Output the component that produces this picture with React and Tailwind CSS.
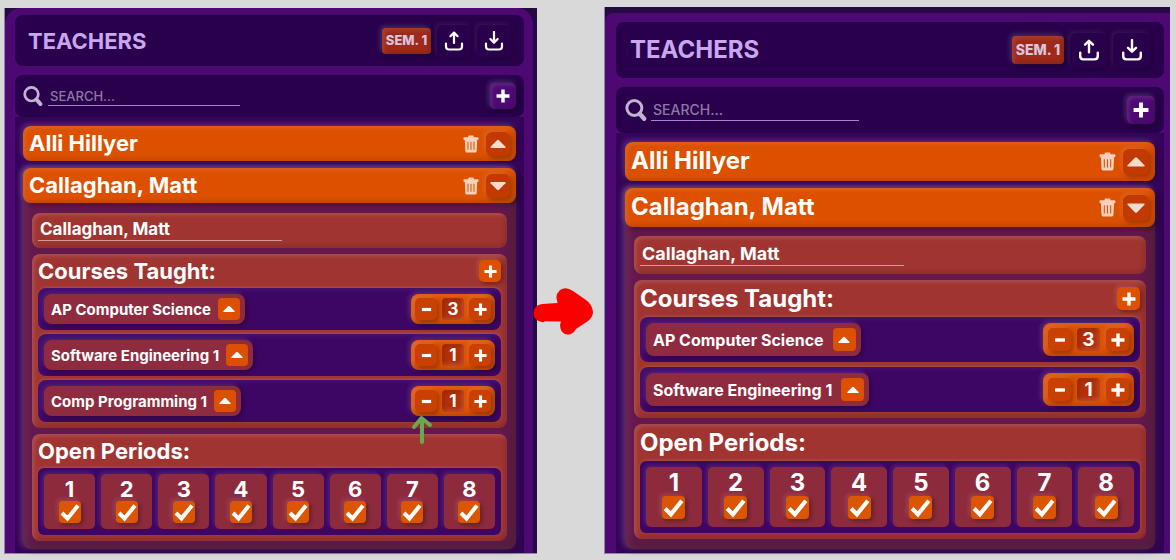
import React, { useState } from "react";

const INSET = "shadow-[inset_2px_2px_4px_rgba(255,255,255,0.16),inset_-2px_-2px_4px_rgba(0,0,0,0.16)]";
const RAISED =
  "shadow-[-2px_-2px_4px_rgba(255,255,255,0.12),2px_2px_4px_rgba(0,0,0,0.3)]";
const FLAT =
  "shadow-[-2px_-2px_4px_rgba(255,255,255,0.07),2px_2px_4px_rgba(0,0,0,0.2)]";
const BOTH =
  "shadow-[-2px_-2px_5px_rgba(255,255,255,0.16),2px_2px_5px_rgba(0,0,0,0.35),inset_2px_2px_4px_rgba(255,255,255,0.12),inset_-2px_-2px_4px_rgba(0,0,0,0.14)]";

const COMPACT = {
  frame: "pr-1",
  shell: "pl-[10px] pr-[9px] pt-[7px] rounded-t-2xl",
  header: "h-[51px] pl-[13px] pr-[13px]",
  title: "text-[22px]",
  sem: "w-[49px] h-[26px] text-[13px]",
  tool: "w-[34px] h-8",
  toolIcon: "w-5 h-5",
  search: "h-[42px] mt-[9px] pl-2 pr-2",
  searchIcon: "w-5 h-5",
  searchInput: "w-48 h-[19px] text-[13px] leading-4 ml-[5px]",
  add: "w-[26px] h-[26px]",
  addIcon: "w-[14px] h-[14px]",
  list: "gap-[7px] px-2 pt-[9px] pb-1",
  bar: "h-[35px] pl-[6px]",
  barText: "text-[22px]",
  trash: "w-4 h-[18px]",
  toggle: "w-6 h-6",
  toggleIcon: "w-4 h-4",
  details: "px-[9px] pt-[10px] pb-2",
  nameCard: "h-[35px]",
  nameInput: "w-[244px] h-[23px] text-[17px] leading-5",
  section: "h-[34px]",
  sectionText: "text-[22px]",
  rows: "gap-1",
  row: "h-[42px]",
  tag: "h-[30px] pr-[5px] gap-[7px]",
  tagText: "text-[15px]",
  mini: "w-[22px] h-[22px]",
  miniIcon: "w-[13px] h-[13px]",
  stepper: "h-[30px] px-1 gap-[5px]",
  count: "text-[17px]",
  cell: "h-[55px] pt-[3px]",
  digit: "text-[22px] leading-6",
};

const LARGE = {
  frame: "pt-[6px]",
  shell: "pl-[11px] pr-[6px] pt-[9px] rounded-tl-lg",
  header: "h-[56px] pl-[14px] pr-[14px]",
  title: "text-[24px]",
  sem: "w-[52px] h-7 text-[14px]",
  tool: "w-[37px] h-[35px]",
  toolIcon: "w-[22px] h-[22px]",
  search: "h-[46px] mt-[9px] pl-[9px] pr-[9px]",
  searchIcon: "w-[22px] h-[22px]",
  searchInput: "w-52 h-[21px] text-[14px] leading-[18px] ml-[4px]",
  add: "w-7 h-7",
  addIcon: "w-4 h-4",
  list: "gap-[7px] px-[9px] pt-[9px] pb-1",
  bar: "h-[39px] pl-[6px]",
  barText: "text-[24px]",
  trash: "w-[17px] h-[19px]",
  toggle: "w-[26px] h-[26px]",
  toggleIcon: "w-[18px] h-[18px]",
  details: "px-[9px] pt-[9px] pb-[10px]",
  nameCard: "h-[38px]",
  nameInput: "w-[264px] h-[25px] text-[18px] leading-[22px]",
  section: "h-[37px]",
  sectionText: "text-[24px]",
  rows: "gap-[5px]",
  row: "h-[45px]",
  tag: "h-[33px] pr-[5px] gap-[9px]",
  tagText: "text-[16px]",
  mini: "w-[23px] h-[23px]",
  miniIcon: "w-[14px] h-[14px]",
  stepper: "h-[33px] px-[5px] gap-[6px]",
  count: "text-[19px]",
  cell: "h-[60px] pt-[3px]",
  digit: "text-[24px] leading-[26px]",
};

function Plus({ className }) {
  return (
    <svg viewBox="0 0 14 14" className={className} aria-hidden="true">
      <path d="M7 .5v13M.5 7h13" stroke="#fff" strokeWidth="3.4" fill="none" />
    </svg>
  );
}

function Minus({ className }) {
  return (
    <svg viewBox="0 0 14 14" className={className} aria-hidden="true">
      <path d="M2 7h10" stroke="#fff" strokeWidth="3.4" fill="none" />
    </svg>
  );
}

function Caret({ className, down, color = "#fff" }) {
  return (
    <svg viewBox="0 0 16 16" className={className} aria-hidden="true">
      <path
        d={down ? "M.5 5.2Q0 4 1.2 4h13.6q1.2 0 .7 1.2L9 11.8q-1 .9-2 0z" : "M.5 10.8Q0 12 1.2 12h13.6q1.2 0 .7-1.2L9 4.2q-1-.9-2 0z"}
        fill={color}
      />
    </svg>
  );
}

function Trash({ className }) {
  return (
    <svg viewBox="0 0 16 18" className={className} aria-hidden="true">
      <path
        fill="#f8d0bb"
        fillRule="evenodd"
        d="M5.2 2.2V1.5Q5.2.5 6.2.5h3.6q1 0 1 1v.7h4q.7 0 .7.7v1.4q0 .6-.6.6h-.7l-.5 11q-.1 1.6-1.6 1.6H3.9q-1.5 0-1.6-1.6l-.5-11h-.7q-.6 0-.6-.6V2.9q0-.7.7-.7zM4.500 6.800v7.900h1V6.800zM7.500 6.800v7.900h1V6.800zM10.500 6.800v7.900h1V6.800z"
      />
    </svg>
  );
}

function Tray({ className, up }) {
  return (
    <svg viewBox="0 0 20 20" className={className} aria-hidden="true">
      <g fill="none" stroke="#fff" strokeWidth="2.2" strokeLinecap="round" strokeLinejoin="round">
        <path d="M2 12.500v3Q2 18.500 5 18.500h10q3 0 3-3v-3" />
        <path d={up ? "M10 12V2M6.400 5.200 10 1.600l3.600 3.600" : "M10 1v10M6.400 8 10 11.600 13.600 8"} />
      </g>
    </svg>
  );
}

function Magnifier({ className }) {
  return (
    <svg viewBox="0 0 20 20" className={className} aria-hidden="true">
      <circle cx="8.500" cy="8.200" r="6.800" fill="none" stroke="#c3b3d2" strokeWidth="2.700" />
      <path d="m13.400 13.400 4 4.600" stroke="#c3b3d2" strokeWidth="4" strokeLinecap="round" />
    </svg>
  );
}

function Pointer() {
  return (
    <svg viewBox="0 0 22 30" className="absolute left-0 top-[29px] z-10 w-[22px] h-[30px] pointer-events-none" aria-hidden="true">
      <path d="M11 27V4M3 12 10.500 3 19 10" fill="none" stroke="#6aa84f" strokeWidth="4" strokeLinecap="round" strokeLinejoin="round" />
    </svg>
  );
}

function Stepper({ s, name, start, marked }) {
  const [count, setCount] = useState(start);
  const btn = `${s.mini} grid place-items-center rounded-[5px] bg-[#ca3f02] ${RAISED}`;
  return (
    <div className={`${s.stepper} relative flex items-center rounded-lg bg-[#dc5000] ${BOTH}`}>
      <button type="button" aria-label={`Fewer sections of ${name}`} className={btn} onClick={() => setCount(Math.max(0, count - 1))}>
        <Minus className={s.miniIcon} />
      </button>
      <output className={`${s.mini} ${s.count} grid place-items-center rounded-[4px] bg-[#b42f08] font-bold leading-none shadow-[inset_2px_2px_4px_rgba(0,0,0,0.15),inset_-2px_-2px_4px_rgba(255,255,255,0.16)]`}>
        {count}
      </output>
      <button type="button" aria-label={`More sections of ${name}`} className={btn} onClick={() => setCount(count + 1)}>
        <Plus className={s.miniIcon} />
      </button>
      {marked && <Pointer />}
    </div>
  );
}

function TeacherBar({ s, name, down }) {
  return (
    <div className={`${s.bar} flex items-center rounded-lg bg-[#dc5000] pr-[6px] ${BOTH}`}>
      <h3 className={`${s.barText} grow pb-px font-bold leading-none`}>{name}</h3>
      <button type="button" aria-label={`Delete ${name}`} className="mr-[7px]">
        <Trash className={s.trash} />
      </button>
      <button type="button" aria-label={`Toggle ${name}`} className={`${s.toggle} grid place-items-center rounded-md bg-[#c23a02] ${RAISED}`}>
        <Caret down={down} color="#f8dccf" className={s.toggleIcon} />
      </button>
    </div>
  );
}

function Panel({ s, id, courses }) {
  const card = `rounded-lg bg-[#a03431] px-[6px] ${INSET}`;
  return (
    <section className={`${s.frame} flex border-b border-l border-[#8f84a3] bg-[#260b42]`}>
      <div className={`${s.shell} flex min-w-0 grow flex-col bg-[#4e0874]`}>
        <header className={`${s.header} flex items-center gap-[6px] rounded-lg bg-[#28004c]`}>
          <h2 className={`${s.title} grow font-bold leading-none text-[#c9a6ee]`}>TEACHERS</h2>
          <button type="button" className={`${s.sem} whitespace-nowrap rounded-[4px] bg-[#9f2a19] font-extrabold leading-none text-[#dac5de] ${BOTH}`}>
            SEM. 1
          </button>
          <button type="button" aria-label="Upload" className={`${s.tool} grid place-items-center rounded-md ${FLAT}`}>
            <Tray up className={s.toolIcon} />
          </button>
          <button type="button" aria-label="Download" className={`${s.tool} grid place-items-center rounded-md ${FLAT}`}>
            <Tray className={s.toolIcon} />
          </button>
        </header>

        <div className={`${s.search} flex items-center rounded-lg bg-[#28004c]`}>
          <label htmlFor={`${id}-search`}>
            <span className="sr-only">Search teachers</span>
            <Magnifier className={s.searchIcon} />
          </label>
          <input
            id={`${id}-search`}
            type="text"
            placeholder="SEARCH..."
            className={`${s.searchInput} border-b border-[#a883cf] bg-transparent px-[2px] font-medium text-white outline-none placeholder:text-[#8f78a5] placeholder:opacity-100`}
          />
          <button type="button" aria-label="Add teacher" className={`${s.add} ml-auto grid place-items-center rounded-[5px] bg-[#4e0a74] ${BOTH}`}>
            <Plus className={s.addIcon} />
          </button>
        </div>

        <div className={`${s.list} flex grow flex-col bg-[#3d0662] shadow-[inset_5px_0_6px_rgba(20,0,50,0.25),inset_-5px_0_6px_rgba(20,0,50,0.25)]`}>
          <TeacherBar s={s} name="Alli Hillyer" />
          <div className="rounded-lg bg-[#64184d] shadow-[-2px_-1px_6px_rgba(255,255,255,0.2),2px_2px_6px_rgba(0,0,0,0.35),inset_5px_0_6px_rgba(255,255,255,0.06),inset_-6px_-6px_8px_rgba(50,40,30,0.35)]">
            <TeacherBar s={s} name="Callaghan, Matt" down />
            <div className={`${s.details} flex flex-col gap-[6px]`}>
              <div className={`${card} ${s.nameCard} pt-[5px]`}>
                <input
                  type="text"
                  aria-label="Teacher name"
                  defaultValue="Callaghan, Matt"
                  className={`${s.nameInput} block border-b border-[#cf9a98] bg-transparent px-[2px] font-bold outline-none`}
                />
              </div>

              <div className={`${card} pb-[6px]`}>
                <div className={`${s.section} flex items-center justify-between`}>
                  <h4 className={`${s.sectionText} font-bold leading-none`}>Courses Taught:</h4>
                  <button type="button" aria-label="Add course" className={`${s.mini} grid place-items-center rounded-[5px] bg-[#dc5000] ${RAISED}`}>
                    <Plus className={s.miniIcon} />
                  </button>
                </div>
                <ul className={`${s.rows} flex flex-col`}>
                  {courses.map((c) => (
                    <li key={c.name} className={`${s.row} flex items-center justify-between rounded-lg bg-[#3e0664] px-[6px] shadow-[0_-1px_3px_rgba(255,255,255,0.14),inset_2px_2px_4px_rgba(90,60,160,0.25)]`}>
                      <div className={`${s.tag} flex items-center rounded-lg bg-[#8f2b3f] pl-[7px] ${RAISED}`}>
                        <span className={`${s.tagText} whitespace-nowrap font-bold leading-none`}>{c.name}</span>
                        <button type="button" aria-label={`Change ${c.name}`} className={`${s.mini} grid place-items-center rounded-[4px] bg-[#dc5000]`}>
                          <Caret className="h-3 w-3" />
                        </button>
                      </div>
                      <Stepper s={s} name={c.name} start={c.count} marked={c.marked} />
                    </li>
                  ))}
                </ul>
              </div>

              <div className={`${card} pb-[6px]`}>
                <div className={`${s.section} flex items-center`}>
                  <h4 className={`${s.sectionText} font-bold leading-none`}>Open Periods:</h4>
                </div>
                <div className="grid grid-cols-8 gap-[6px] rounded-md bg-[#3e0664] p-[6px] shadow-[0_-1px_3px_rgba(255,255,255,0.14)]">
                  {[1, 2, 3, 4, 5, 6, 7, 8].map((n) => (
                    <label key={n} className={`${s.cell} flex flex-col items-center rounded-[5px] bg-[#8d2b3d] shadow-[-2px_-2px_4px_rgba(255,255,255,0.1)]`}>
                      <span className={`${s.digit} font-bold`}>{n}</span>
                      <span className={`${s.mini} grid`}>
                        <input type="checkbox" defaultChecked className={`peer col-start-1 row-start-1 h-full w-full appearance-none rounded-[4px] bg-[#dc5500] ${RAISED}`} />
                        <svg viewBox="0 0 22 22" className="pointer-events-none invisible relative col-start-1 row-start-1 h-full w-full peer-checked:visible" aria-hidden="true">
                          <path d="m3 12 5.500 5.500L19 4.500" fill="none" stroke="#fff" strokeWidth="4" />
                        </svg>
                      </span>
                    </label>
                  ))}
                </div>
              </div>
            </div>
          </div>
        </div>
      </div>
    </section>
  );
}

const BEFORE = [
  { name: "AP Computer Science", count: 3 },
  { name: "Software Engineering 1", count: 1 },
  { name: "Comp Programming 1", count: 1, marked: true },
];
const AFTER = BEFORE.slice(0, 2);

export default function App() {
  return (
    <main className="min-h-screen bg-[#d9d9d9] pb-[6px] pl-1 pr-[6px] pt-[7px] font-['Inter',sans-serif] text-white">
      <div className="grid grid-cols-[533fr_67fr_566fr] items-start">
        <div className="pt-px">
          <Panel s={COMPACT} id="before" courses={BEFORE} />
        </div>
        <svg viewBox="0 0 60 48" className="relative -ml-1 mt-[281px] h-12 w-[60px]" aria-label="becomes" role="img">
          <path
            fill="#fb0000"
            d="M9 16Q1 17 .5 25 1 33 9 34q1 .5 3-.8l16 .3q-2 5 .5 9.500Q32 48 38 46q3-1 5-5l12-8q5-4 5-9-1-8-7-12L40 3Q33-2 27 2q-4 4-3.500 8l1 5z"
          />
        </svg>
        <Panel s={LARGE} id="after" courses={AFTER} />
      </div>
    </main>
  );
}
